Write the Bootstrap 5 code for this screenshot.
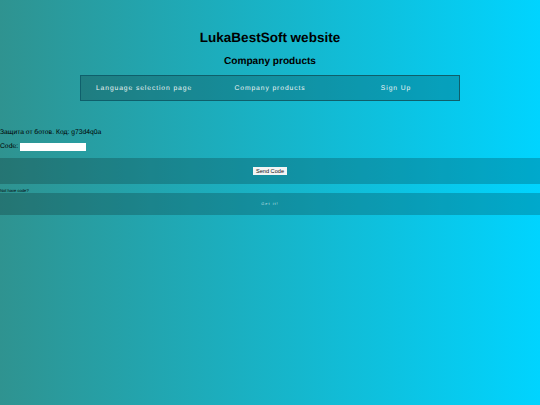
<!DOCTYPE html>
<html lang="en">
<head>
<meta charset="utf-8">
<title>LukaBestSoft website</title>
<link href="https://cdn.jsdelivr.net/npm/bootstrap@5.3.0/dist/css/bootstrap.min.css" rel="stylesheet">
<style>
html, body { height: 100%; }
body {
  background: linear-gradient(90deg, #2f9390 0%, #00d4ff 100%);
  font-family: "Liberation Sans", Arial, sans-serif;
  color: #000;
  font-size: 6.75px;
  text-rendering: geometricPrecision;
}
.site-title { font-size: 13.5px; font-weight: 700; line-height: 16px; margin: 0; padding-top: 30px; text-align: center; }
.site-sub { font-size: 10.1px; font-weight: 700; line-height: 12px; margin: 0; padding-top: 10px; text-align: center; }
.site-nav {
  width: 380px; height: 26px; margin: 7px auto 0;
  border: 1px solid #0f5f6b;
  background: rgba(0, 0, 0, .2);
  padding-top: 1px;
}
.site-nav a {
  flex: 1 1 0; text-align: center; color: #eef5f5;
  font-size: 6.75px; letter-spacing: .9px; line-height: 23px; text-decoration: none;
}
.bot-line { line-height: 8px; margin: 0; padding-top: 28px; }
.code-line { line-height: 10px; margin: 0; padding-top: 5px; display: flex; align-items: center; }
.code-line input { width: 66px; height: 8px; border: 0; background: #fff; padding: 0; margin-left: 2px; }
.band { background: rgba(0, 0, 0, .2); }
.send-band { height: 26px; margin-top: 6px; }
.send-band button {
  font: 5.6px "Liberation Sans", Arial, sans-serif; height: 8px; width: 34px; padding: 0;
  border: 0; background: #f2f4f4; color: #111;
}
.hint { font-size: 4.1px; line-height: 5px; margin: 0; padding-top: 4px; }
.get-band { height: 22px; color: #cfe6ea; font-size: 3.9px; letter-spacing: 1px; }
</style>
</head>
<body>
<h1 class="site-title">LukaBestSoft website</h1>
<h2 class="site-sub">Company products</h2>
<nav class="site-nav d-flex align-items-center">
  <a href="#">Language selection page</a>
  <a href="#">Company products</a>
  <a href="#">Sign Up</a>
</nav>
<p class="bot-line">Защита от ботов. Код: g73d4q0a</p>
<form>
  <label class="code-line">Code: <input type="text" aria-label="Code"></label>
  <div class="band send-band d-flex align-items-center justify-content-center">
    <button type="button">Send Code</button>
  </div>
</form>
<p class="hint">Not have code?</p>
<div class="band get-band d-flex align-items-center justify-content-center">Get it!</div>
<script src="https://cdn.jsdelivr.net/npm/bootstrap@5.3.0/dist/js/bootstrap.bundle.min.js"></script>
</body>
</html>
